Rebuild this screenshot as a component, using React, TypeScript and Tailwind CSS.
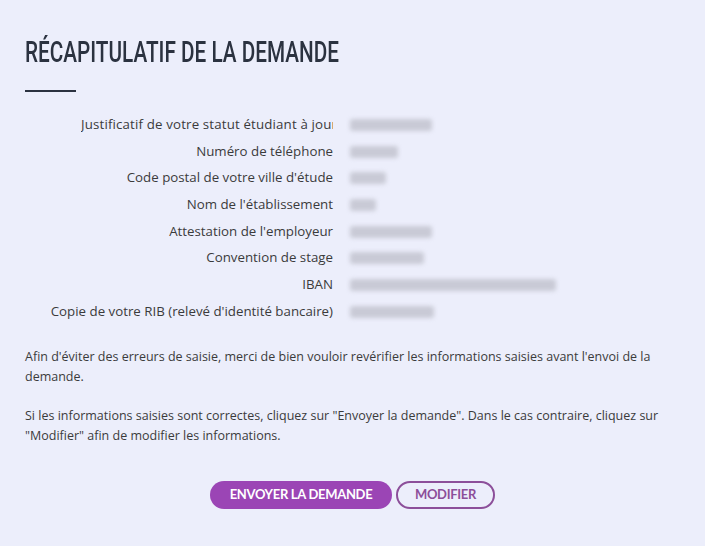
import React from "react";

const rows: { label: string; w: number; clip?: boolean }[] = [
  { label: "Justificatif de votre statut étudiant à jour", w: 82, clip: true },
  { label: "Numéro de téléphone", w: 48 },
  { label: "Code postal de votre ville d'étude", w: 36 },
  { label: "Nom de l'établissement", w: 26 },
  { label: "Attestation de l'employeur", w: 82 },
  { label: "Convention de stage", w: 74 },
  { label: "IBAN", w: 206 },
  { label: "Copie de votre RIB (relevé d'identité bancaire)", w: 84 },
];

export default function App() {
  return (
    <div className="w-[705px] h-[546px] bg-[#eceefb] overflow-hidden text-[#3b3b3b]" style={{ fontFamily: "'Open Sans', sans-serif" }}>
      <div className="px-[25px] pt-[36px]">
        <h1
          className="text-[29px] leading-[32px] font-medium text-[#2b3240] whitespace-nowrap origin-left scale-x-[0.715]"
          style={{ fontFamily: "Roboto, sans-serif" }}
        >
          RÉCAPITULATIF DE LA DEMANDE
        </h1>
        <div className="mt-[22px] w-[51px] h-[1.5px] bg-[#2b3240]" />

        <div className="mt-[20px] flex flex-col text-[13.3px]">
          {rows.map((r) => (
            <div key={r.label} className="flex items-center h-[26.7px]">
              <div className="w-[308px] shrink-0 text-right whitespace-nowrap">
                {r.clip ? (
                  <span className="inline-block w-[252px] overflow-hidden text-left align-bottom tracking-[0.15px]">{r.label}</span>
                ) : (
                  r.label
                )}
              </div>
              <div className="ml-[17px] h-[12px] rounded-[3px] bg-[#c9cad6] blur-[2px]" style={{ width: r.w }} />
            </div>
          ))}
        </div>

        <div className="mt-[22px] text-[12.5px] leading-[20px] text-[#3b3b3b]">
          <p>
            Afin d'éviter des erreurs de saisie, merci de bien vouloir revérifier les informations saisies avant l'envoi de la demande.
          </p>
          <p className="mt-[19px]">
            Si les informations saisies sont correctes, cliquez sur "Envoyer la demande". Dans le cas contraire, cliquez sur "Modifier" afin de modifier les informations.
          </p>
        </div>

        <div className="mt-[35px] flex justify-center gap-[4px]" style={{ fontFamily: "Lato, sans-serif" }}>
          <button className="h-[28px] w-[182px] rounded-full bg-[#9b45b5] text-white text-[13px] font-bold tracking-[-0.3px]">
            ENVOYER LA DEMANDE
          </button>
          <button className="h-[28px] w-[99px] rounded-full border-2 border-[#8c4f9a] text-[#8c4f9a] text-[13px] font-bold tracking-[-0.3px]">
            MODIFIER
          </button>
        </div>
      </div>
    </div>
  );
}
